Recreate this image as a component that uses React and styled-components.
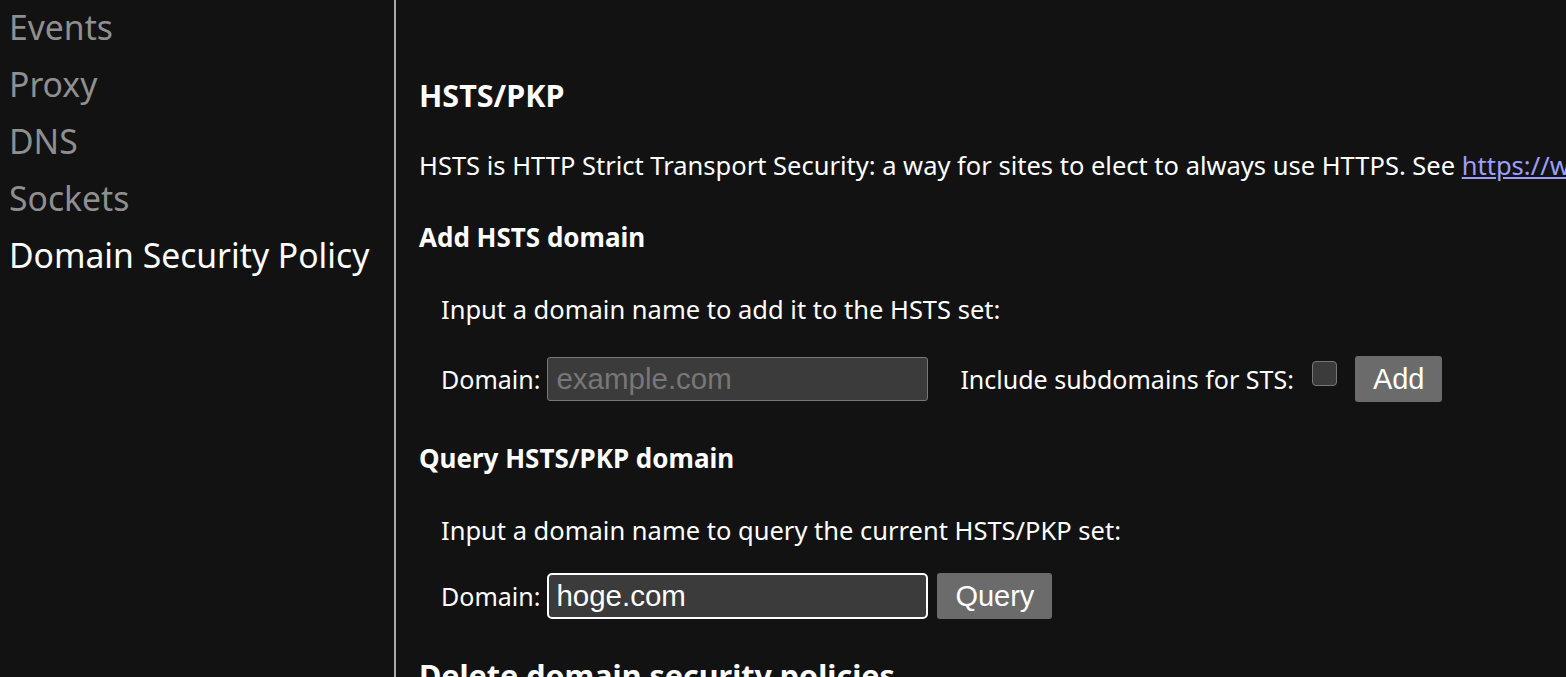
import styled, { createGlobalStyle } from "styled-components"

const GlobalStyle = createGlobalStyle`
  html, body {
    margin: 0;
    padding: 0;
    background: #121212;
    color: #ffffff;
    font-family: "Noto Sans", "Open Sans", sans-serif;
    overflow: hidden;
  }
`

const Page = styled.div`
  display: flex;
  height: 677px;
  width: 1566px;
  overflow: hidden;
`

const Sidebar = styled.nav`
  width: 394px;
  flex-shrink: 0;
  border-right: 2px solid #aaaaaa;
  display: flex;
  flex-direction: column;
`

const NavItem = styled.div`
  height: 57px;
  line-height: 55px;
  padding-left: 9px;
  font-size: 33.7px;
  white-space: nowrap;
  color: ${(p) => (p.$active ? "#ffffff" : "#8f8f8f")};
`

const Main = styled.main`
  flex: 1;
  padding: 75px 0 0 23px;
  white-space: nowrap;
  overflow: hidden;
`

const H2 = styled.h2`
  margin: ${(p) => p.$top || 0}px 0 0;
  font-size: 30.5px;
  line-height: 40px;
  font-weight: 700;
`

const Para = styled.p`
  margin: 35px 0 0;
  font-size: 25.5px;
  line-height: 30px;
`

const Link = styled.a`
  color: #9e9eff;
  text-decoration: underline;
`

const H3 = styled.h3`
  margin: ${(p) => p.$top}px 0 0;
  font-size: 26px;
  line-height: 30px;
  font-weight: 700;
`

const Block = styled.div`
  padding-left: 22px;
`

const Hint = styled.p`
  margin: 42px 0 0;
  font-size: 25.5px;
  line-height: 30px;
`

const Row = styled.div`
  display: flex;
  align-items: center;
  margin-top: ${(p) => p.$top}px;
  height: 46px;
  font-size: 25px;
`

const Label = styled.label`
  margin-right: 7px;
`

const TextInput = styled.input`
  box-sizing: border-box;
  width: 381px;
  height: 44px;
  padding: 0 8px;
  background: #3b3b3b;
  border: 1px solid #777777;
  border-radius: 3px;
  color: #ffffff;
  font-family: "Liberation Sans", Arial, sans-serif;
  font-size: 29.5px;
  outline: none;
  &::placeholder {
    color: #777777;
  }
  ${(p) =>
    p.$focused &&
    `
    border: 2px solid #ffffff;
    border-radius: 5px;
    height: 46px;
    padding: 0 7px;
  `}
`

const CheckLabel = styled.span`
  margin-left: 32px;
  margin-right: 18px;
`

const CheckBox = styled.span`
  box-sizing: border-box;
  width: 25px;
  height: 25px;
  margin-top: -12px;
  background: #3b3b3b;
  border: 1px solid #777777;
  border-radius: 4px;
`

const Button = styled.button`
  box-sizing: border-box;
  height: 46px;
  margin-left: ${(p) => p.$left}px;
  padding: 0 18px;
  background: #6b6b6b;
  border: none;
  border-radius: 3px;
  color: #ffffff;
  font-family: "Liberation Sans", Arial, sans-serif;
  font-size: 29px;
`

const navItems = ["Events", "Proxy", "DNS", "Sockets", "Domain Security Policy"]

export default function App() {
  return (
    <>
      <GlobalStyle />
      <Page>
        <Sidebar>
          {navItems.map((item) => (
            <NavItem key={item} $active={item === "Domain Security Policy"}>
              {item}
            </NavItem>
          ))}
        </Sidebar>
        <Main>
          <H2>HSTS/PKP</H2>
          <Para>
            HSTS is HTTP Strict Transport Security: a way for sites to elect to always use HTTPS. See{" "}
            <Link href="#">https://www.chromium.org/hsts</Link>
          </Para>

          <H3 $top={42}>Add HSTS domain</H3>
          <Block>
            <Hint>Input a domain name to add it to the HSTS set:</Hint>
            <Row $top={32}>
              <Label>Domain:</Label>
              <TextInput placeholder="example.com" />
              <CheckLabel>Include subdomains for STS:</CheckLabel>
              <CheckBox />
              <Button $left={18}>Add</Button>
            </Row>
          </Block>

          <H3 $top={41}>Query HSTS/PKP domain</H3>
          <Block>
            <Hint>Input a domain name to query the current HSTS/PKP set:</Hint>
            <Row $top={28}>
              <Label>Domain:</Label>
              <TextInput $focused defaultValue="hoge.com" />
              <Button $left={9}>Query</Button>
            </Row>
          </Block>

          <H2 $top={36}>Delete domain security policies</H2>
        </Main>
      </Page>
    </>
  )
}
